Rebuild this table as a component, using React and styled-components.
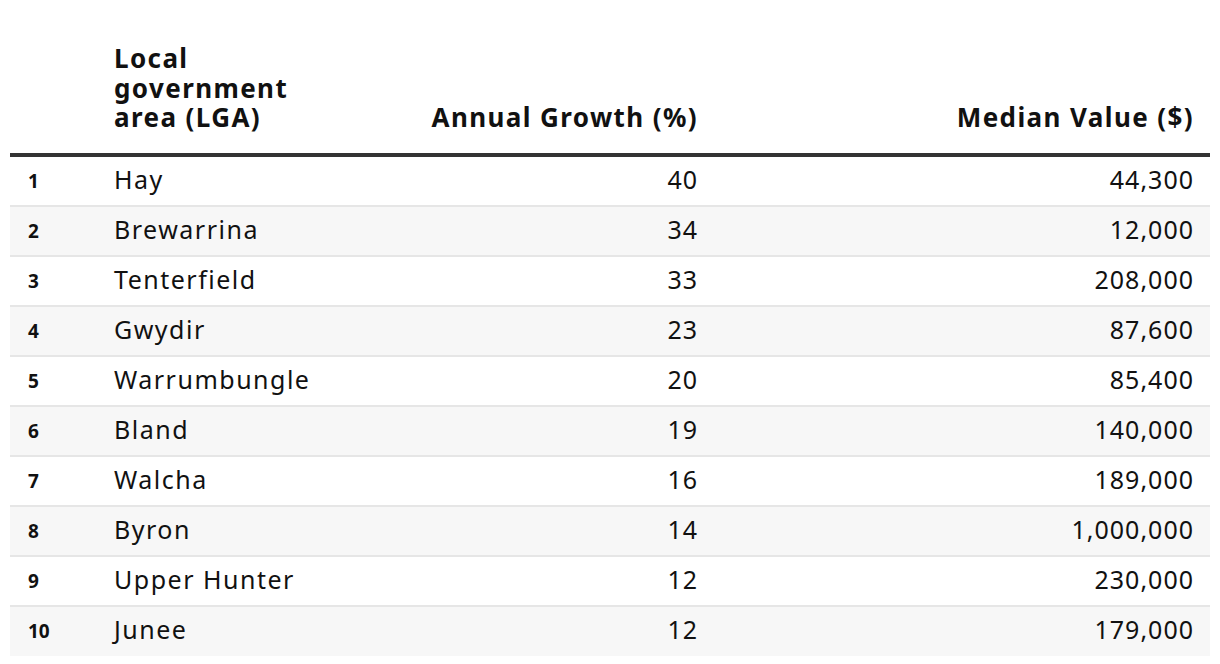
import React from 'react'
import styled, { createGlobalStyle } from 'styled-components';

const GlobalStyle = createGlobalStyle`
    body {
        margin: 0;
        background: #ffffff;
        font-family: "Noto Sans", "Liberation Sans", sans-serif;
        color: #111111;
    }
`

const Wrapper = styled.div`
    padding: 44px 10px 0 10px;
`

const Table = styled.table`
    width: 1200px;
    border-collapse: collapse;
    table-layout: fixed;
`

const HeadCell = styled.th`
    font-size: 26px;
    font-weight: 700;
    line-height: 29.5px;
    letter-spacing: 1.4px;
    vertical-align: bottom;
    text-align: ${props => props.$right ? 'right' : 'left'};
    padding: 0 ${props => props.$pr || 0}px 20px 0;
    border-bottom: 4px solid #333333;
    color: #111111;
    white-space: nowrap;
`

const Row = styled.tr`
    background: ${props => props.$striped ? '#f7f7f7' : '#ffffff'};
    border-bottom: 2px solid ${props => props.$last ? 'transparent' : '#e6e6e6'};
`

const Cell = styled.td`
    height: 45px;
    padding: 0 ${props => props.$pr || 0}px 3px 0;
    font-size: 25px;
    line-height: 30px;
    font-weight: 400;
    letter-spacing: ${props => props.$right ? '1px' : '1.5px'};
    text-align: ${props => props.$right ? 'right' : 'left'};
    vertical-align: middle;
    white-space: nowrap;
`

const Rank = styled.td`
    height: 47px;
    padding: 1px 0 0 18px;
    font-size: 19px;
    line-height: 24px;
    font-weight: 700;
    vertical-align: middle;
`

const rows = [
    ['Hay', 40, '44,300'],
    ['Brewarrina', 34, '12,000'],
    ['Tenterfield', 33, '208,000'],
    ['Gwydir', 23, '87,600'],
    ['Warrumbungle', 20, '85,400'],
    ['Bland', 19, '140,000'],
    ['Walcha', 16, '189,000'],
    ['Byron', 14, '1,000,000'],
    ['Upper Hunter', 12, '230,000'],
    ['Junee', 12, '179,000'],
]

const App = () => {
    return (
        <Wrapper>
            <GlobalStyle />
            <Table>
                <colgroup>
                    <col style={{width: 104}} />
                    <col style={{width: 300}} />
                    <col style={{width: 284}} />
                    <col />
                </colgroup>
                <thead>
                    <tr>
                        <HeadCell></HeadCell>
                        <HeadCell>Local<br/>government<br/>area (LGA)</HeadCell>
                        <HeadCell $right>Annual Growth (%)</HeadCell>
                        <HeadCell $right $pr={16}>Median Value ($)</HeadCell>
                    </tr>
                </thead>
                <tbody>
                    {rows.map((r, i) => (
                        <Row key={r[0]} $striped={i % 2 === 1} $last={i === rows.length - 1}>
                            <Rank>{i + 1}</Rank>
                            <Cell>{r[0]}</Cell>
                            <Cell $right>{r[1]}</Cell>
                            <Cell $right $pr={16}>{r[2]}</Cell>
                        </Row>
                    ))}
                </tbody>
            </Table>
        </Wrapper>
    )
}

export default App
